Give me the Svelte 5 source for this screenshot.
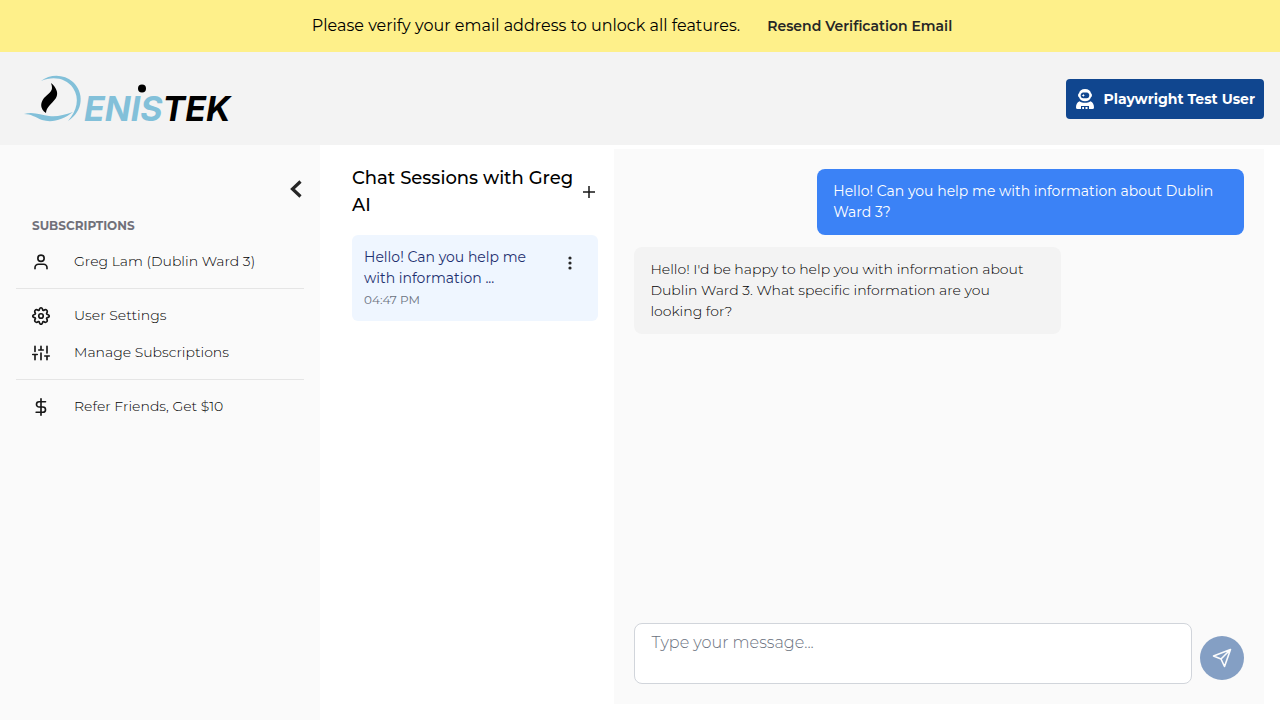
<script lang="ts">
  const groups = [
    { title: 'Subscriptions', items: [{ icon: 'user', label: 'Greg Lam (Dublin Ward 3)' }] },
    {
      title: '',
      items: [
        { icon: 'gear', label: 'User Settings' },
        { icon: 'sliders', label: 'Manage Subscriptions' }
      ]
    },
    { title: '', items: [{ icon: 'dollar', label: 'Refer Friends, Get $10' }] }
  ];
  const messages = [
    { mine: true, text: 'Hello! Can you help me with information about Dublin Ward 3?' },
    {
      mine: false,
      text: "Hello! I'd be happy to help you with information about Dublin Ward 3. What specific information are you looking for?"
    }
  ];
  let draft = $state('');
</script>

<div class="page">
  <div class="banner">
    <span>Please verify your email address to unlock all features.</span>
    <button type="button">Resend Verification Email</button>
  </div>

  <header>
    <a class="logo" href="#home" aria-label="Denistek">
      <svg width="212" height="56" viewBox="20 71 212 56">
        <path fill="#82c0d9" d="M41 81C50 74 64 74 73 82C84 92 84 111 68 121C77 111 80 98 73 88C66 78 53 76 41 81Z" />
        <path fill="#82c0d9" d="M24 114C33 111 41 115 49 116C57 117 64 115 73 112C63 120 52 123 42 120C35 117 31 114 24 114Z" />
        <path d="M51 83C56 87 59 93 56 98C52 104 46 107 46 113C40 109 40 103 44 98C50 92 54 91 51 83Z" />
        <text class="wordmark" x="84" y="121"><tspan fill="#82c0d9">ENIS</tspan><tspan>TEK</tspan></text>
        <circle cx="142" cy="88.500" r="4" />
      </svg>
    </a>
    <button type="button" class="account">
      <svg width="20" height="20" viewBox="0 0 20 20" fill="#fff" aria-hidden="true">
        <path fill-rule="evenodd" d="M10 0C13.500 0 15.500 2 16 4.200C17.300 4.700 17.300 7.800 16 8.300C15 11 13 12.300 10 12.300S5 11 4 8.300C2.700 7.800 2.700 4.700 4 4.200C4.500 2 6.500 0 10 0ZM8.300 3.500C4.800 3.500 4.800 9.300 8.300 9.300H11.700C15.200 9.300 15.200 3.500 11.700 3.500Z" />
        <path d="M8.300 4.700L8.800 5.900L10 6.400L8.800 6.900L8.300 8.100L7.800 6.900L6.600 6.400L7.800 5.900Z" />
        <path d="M4.500 12.300C7.500 14.300 12.500 14.300 15.500 12.300C18 13.300 19 16 19 18.500Q19 20 17.500 20H14V17H6V20H2.500Q1 20 1 18.500C1 16 2 13.300 4.500 12.300Z" />
        <path d="M7.200 18H9V20H7.200ZM10.500 18H12.500V20H10.500Z" />
      </svg>
      Playwright Test User
    </button>
  </header>

  <div class="body">
    <aside>
      <button type="button" class="collapse" aria-label="Collapse sidebar">
        <svg width="16" height="20" viewBox="0 0 16 20" fill="none" stroke="#262626" stroke-width="3.200"><path d="M12.500 2.500L4.500 10l8 7.500" /></svg>
      </button>
      <nav>
        {#each groups as group}
          <section>
            {#if group.title}<h2>{group.title}</h2>{/if}
            {#each group.items as item}
              <a href="#{item.icon}">
                <svg width="18" height="18" viewBox="0 0 24 24" fill="none" stroke="#171717" stroke-width="2.200" stroke-linecap="round" stroke-linejoin="round" aria-hidden="true">
                  {#if item.icon === 'user'}
                    <circle cx="12" cy="7" r="4.200" />
                    <path d="M4 21v-1.500a4.500 4.500 0 0 1 4.500-4.500h7a4.500 4.500 0 0 1 4.500 4.500V21" />
                  {:else if item.icon === 'gear'}
                    <circle cx="12" cy="12" r="3" />
                    <path d="M9.600 4.200Q10.200 1 12 1t2.400 3.200l1 .4Q18.200 2.800 19.700 4.300t-.3 4.300l.4 1Q23 10.200 23 12t-3.200 2.400l-.4 1Q21.200 18.200 19.700 19.700t-4.300-.3l-1 .4Q13.800 23 12 23t-2.400-3.200l-1-.4Q5.800 21.200 4.300 19.700t.3-4.300l-.4-1Q1 13.800 1 12t3.200-2.400l.4-1Q2.800 5.800 4.300 4.300t4.300.3Z" />
                  {:else if item.icon === 'sliders'}
                    <path d="M4 21v-7M4 10V3M12 21v-9M12 8V3M20 21v-5M20 12V3M1 14h6M9 8h6M17 16h6" />
                  {:else}
                    <path d="M12 1v22M18 5H9.500a3.500 3.500 0 0 0 0 7h5a3.500 3.500 0 0 1 0 7H5.500" />
                  {/if}
                </svg>
                {item.label}
              </a>
            {/each}
          </section>
        {/each}
      </nav>
    </aside>

    <main>
      <section class="sessions">
        <div class="heading">
          <h1>Chat Sessions with Greg AI</h1>
          <button type="button" aria-label="New chat session">
            <svg width="18" height="18" viewBox="0 0 18 18" stroke="#171717" stroke-width="1.500"><path d="M9 3v12M3 9h12" /></svg>
          </button>
        </div>
        <div class="session">
          <a href="#session">
            <span>Hello! Can you help me with information ...</span>
            <time>04:47 PM</time>
          </a>
          <button type="button" aria-label="Session options">
            <svg width="16" height="16" viewBox="0 0 16 16" fill="#262626"><circle cx="8" cy="3" r="1.600" /><circle cx="8" cy="8" r="1.600" /><circle cx="8" cy="13" r="1.600" /></svg>
          </button>
        </div>
      </section>

      <section class="chat">
        <div class="messages">
          {#each messages as message}
            <p class:mine={message.mine}>{message.text}</p>
          {/each}
        </div>
        <form onsubmit={(event) => event.preventDefault()}>
          <textarea aria-label="Message" placeholder="Type your message..." bind:value={draft}></textarea>
          <button type="submit" aria-label="Send message" disabled={!draft}>
            <svg width="20" height="20" viewBox="0 0 20 20" fill="none" stroke="#fff" stroke-width="1.600" stroke-linejoin="round" stroke-linecap="round"><path d="M18.500 1.500L1.500 8l7.500 3 3.500 7.500ZM18.500 1.500L9 11" /></svg>
          </button>
        </form>
      </section>
    </main>
  </div>
</div>

<style>
  :global(body) {
    font-family: Montserrat, Inter, sans-serif;
    font-size: 14px;
    font-weight: 300;
    line-height: 21px;
    color: #000;
    background: #fff;
  }
  .page { display: flex; flex-direction: column; min-height: 100vh; }
  .page, .page * { box-sizing: border-box; }
  button, textarea { font: inherit; color: inherit; }
  button { padding: 0; border: 0; background: none; cursor: pointer; }
  svg { display: block; flex: none; overflow: visible; }
  a { color: inherit; text-decoration: none; }
  h1, h2, p { margin: 0; }

  .banner {
    display: flex;
    align-items: center;
    justify-content: center;
    gap: 27px;
    padding: 14px 16px 14px 0;
    background: #fef08a;
    color: #000;
    font-size: 16px;
    font-weight: 400;
    line-height: 24px;
  }
  .banner button { font-size: 14px; font-weight: 600; color: #262626; }

  header {
    display: flex;
    align-items: center;
    justify-content: space-between;
    padding: 19px 16px 18px 20px;
    background: #f3f3f3;
  }
  .wordmark { font: italic 700 34px Inter, sans-serif; }
  .account {
    display: flex;
    align-items: center;
    gap: 8px;
    height: 40px;
    padding: 0 9px;
    border-radius: 4px;
    background: #10468f;
    color: #fff;
    font-weight: 700;
  }

  .body { display: flex; flex: 1; }
  aside { width: 320px; flex: none; padding: 32px 16px; background: #fafafa; }
  .collapse { display: block; margin-left: auto; padding: 2px 0; }
  nav { padding-top: 12px; }
  nav section + section { margin-top: 8px; padding-top: 8px; border-top: 1px solid #e5e5e5; }
  h2 {
    padding: 3px 16px 7px;
    color: #71717a;
    font-size: 12px;
    font-weight: 700;
    line-height: 20px;
    text-transform: uppercase;
  }
  nav a { display: flex; align-items: center; gap: 24px; padding: 8px 16px; }

  main { display: grid; grid-template-columns: 3fr 7fr; flex: 1; padding: 4px 16px 16px; }
  .sessions { padding: 16px; }
  .heading { display: flex; align-items: center; justify-content: space-between; padding-bottom: 16px; }
  h1 { color: #000; font-size: 18px; font-weight: 500; line-height: 27px; }
  .session {
    display: flex;
    align-items: flex-start;
    justify-content: space-between;
    padding: 12px;
    border-radius: 6px;
    background: #eff6ff;
    color: #1e3070;
    font-weight: 400;
  }
  .session a { max-width: 174px; }
  .session time { display: block; margin-top: 2px; color: #6b7280; font-size: 12px; line-height: 18px; }
  .session button { padding: 8px; }

  .chat { display: flex; flex-direction: column; padding: 20px; background: #fafafa; }
  .messages { display: flex; flex: 1; flex-direction: column; gap: 12px; align-items: flex-start; }
  .messages p { width: 70%; padding: 12px 16px; border-radius: 8px; background: #f3f3f3; }
  .messages .mine { align-self: flex-end; background: #3b82f6; color: #fff; font-weight: 400; }
  form { display: flex; align-items: flex-end; gap: 8px; }
  textarea {
    flex: 1;
    min-width: 0;
    height: 61px;
    padding: 7px 16px;
    border: 1px solid #d1d5db;
    border-radius: 8px;
    background: #fff;
    font-size: 16px;
    line-height: 24px;
    resize: none;
  }
  textarea::placeholder { color: #6b7280; }
  form button {
    display: grid;
    place-items: center;
    width: 44px;
    height: 44px;
    margin-bottom: 4px;
    border-radius: 50%;
    background: #10468f;
  }
  form button:disabled { opacity: 0.500; }
</style>
